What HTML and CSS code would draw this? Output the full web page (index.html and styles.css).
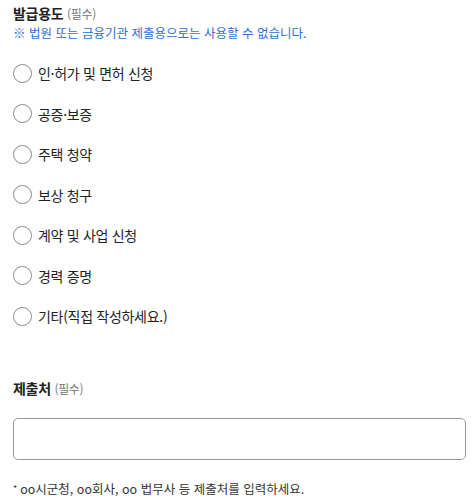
FILE: index.html
```html
<!DOCTYPE html>
<html lang="ko">
  <head>
    <meta charset="UTF-8" />
    <meta name="viewport" content="width=device-width, initial-scale=1.0" />
    <title>발급용도</title>
    <link rel="stylesheet" href="styles.css">
  </head>
  <body>
    <div class="form">
      <!-- 발급용도 -->
      <div class="field">
        <h2 class="field-title">발급용도 <span class="req">(필수)</span></h2>
        <p class="notice">※ 법원 또는 금융기관 제출용으로는 사용할 수 없습니다.</p>
        <ul class="radio-list">
          <li><label class="radio"><input type="radio" name="purpose" /><span class="dot"></span>인·허가 및 면허 신청</label></li>
          <li><label class="radio"><input type="radio" name="purpose" /><span class="dot"></span>공증·보증</label></li>
          <li><label class="radio"><input type="radio" name="purpose" /><span class="dot"></span>주택 청약</label></li>
          <li><label class="radio"><input type="radio" name="purpose" /><span class="dot"></span>보상 청구</label></li>
          <li><label class="radio"><input type="radio" name="purpose" /><span class="dot"></span>계약 및 사업 신청</label></li>
          <li><label class="radio"><input type="radio" name="purpose" /><span class="dot"></span>경력 증명</label></li>
          <li><label class="radio"><input type="radio" name="purpose" /><span class="dot"></span>기타(직접 작성하세요.)</label></li>
        </ul>
      </div>

      <!-- 제출처 -->
      <div class="field field-submit">
        <h2 class="field-title">제출처 <span class="req">(필수)</span></h2>
        <input type="text" class="text-input" />
        <p class="hint"><span class="star">*</span>oo시군청, oo회사, oo 법무사 등 제출처를 입력하세요.</p>
      </div>
    </div>
  </body>
</html>
```

FILE: styles.css
```css
body {
  margin: 0;
  font-family: "Noto Sans CJK KR", "Noto Sans", sans-serif;
  color: #222;
  background-color: #fff;
}
.form {
  padding: 3px 8px 0 13px;
}
.field-title {
  margin: 0;
  font-size: 14px;
  font-weight: bold;
  line-height: 20px;
  letter-spacing: -0.3px;
}
.req {
  font-size: 12px;
  font-weight: normal;
  color: #777;
}
.notice {
  margin: 1px 0 0;
  font-size: 12.5px;
  line-height: 16px;
  color: #2f6fd6;
}
.radio-list {
  list-style: none;
  margin: 12px 0 0;
  padding: 0;
}
.radio-list li {
  height: 40.5px;
  display: flex;
  align-items: center;
}
.radio {
  display: flex;
  align-items: center;
  font-size: 14px;
  letter-spacing: -0.3px;
  cursor: pointer;
}
.radio input {
  display: none;
}
.dot {
  width: 17px;
  height: 17px;
  border: 1px solid #8a8a8a;
  border-radius: 50%;
  margin-right: 6px;
  background-color: #fff;
}
.field-submit {
  margin-top: 41px;
}
.text-input {
  display: block;
  box-sizing: border-box;
  width: 100%;
  height: 42px;
  margin-top: 19px;
  border: 1px solid #9a9a9a;
  border-radius: 5px;
  padding: 0 10px;
  font-size: 14px;
}
.hint {
  margin: 21px 0 0;
  font-size: 12.5px;
  line-height: 16px;
  color: #333;
}
.star {
  font-size: 9px;
  margin-right: 3px;
  vertical-align: 2px;
}
```
